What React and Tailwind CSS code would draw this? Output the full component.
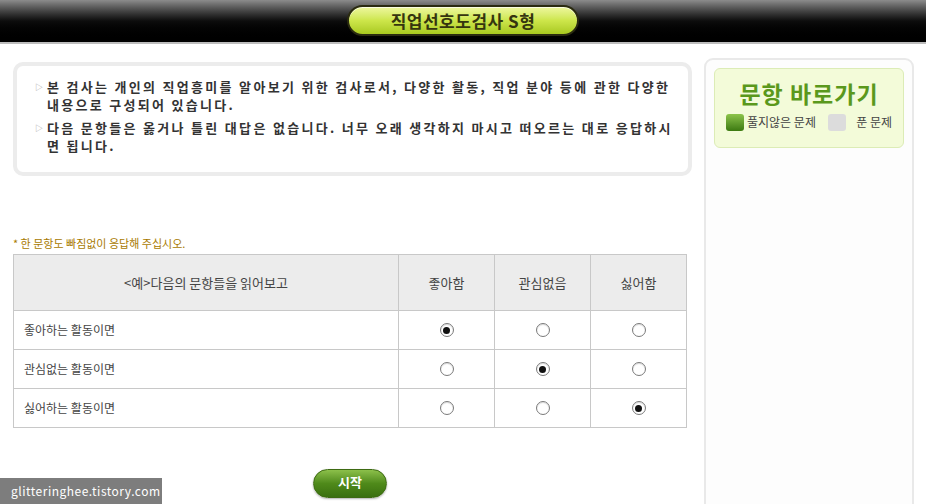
import React from 'react';

const font = { fontFamily: '"Noto Sans CJK KR", "Noto Sans", sans-serif' };

const rows = [
  { label: '좋아하는 활동이면', pick: 0 },
  { label: '관심없는 활동이면', pick: 1 },
  { label: '싫어하는 활동이면', pick: 2 },
];

function Radio({ checked }) {
  return (
    <span className="inline-flex w-[14px] h-[14px] rounded-full border border-[#7a7a7a] bg-white items-center justify-center shadow-[inset_0_1px_1px_rgba(0,0,0,0.15)]">
      {checked && <span className="w-[7px] h-[7px] rounded-full bg-[#111]" />}
    </span>
  );
}

function Bullet({ children }) {
  return (
    <p className="flex">
      <span className="w-[12px] shrink-0 text-[8px] leading-[18px] text-[#aaa] tracking-normal">▷</span>
      <span>{children}</span>
    </p>
  );
}

export default function App() {
  return (
    <div className="relative w-[926px] h-[504px] overflow-hidden bg-white" style={font}>
      <header className="h-[44px] bg-gradient-to-b from-[#8c8c8c] via-[#0d0d0d] to-black border-b-2 border-[#bdbdbd] flex justify-center pt-[5px]">
        <div className="w-[232px] h-[31px] rounded-full border-2 border-[#2a2a10] bg-gradient-to-b from-[#eef79c] via-[#cde64a] to-[#a9c91e] flex items-center justify-center shadow-[inset_0_1px_0_rgba(255,255,255,0.7)]">
          <span className="text-[17px] font-bold text-[#35350f] tracking-[0.5px]">직업선호도검사 S형</span>
        </div>
      </header>

      <div className="flex">
        <main className="w-[692px] pl-[13px] pt-[18px]">
          <section className="h-[114px] rounded-[10px] border-4 border-[#ececec] pl-[18px] pr-[10px] pt-[12px] text-[13px] font-bold leading-[18px] text-[#333] tracking-[2.3px] flex flex-col gap-[5px]">
            <Bullet>본 검사는 개인의 직업흥미를 알아보기 위한 검사로서, 다양한 활동, 직업 분야 등에 관한 다양한 내용으로 구성되어 있습니다.</Bullet>
            <Bullet>다음 문항들은 옳거나 틀린 대답은 없습니다. 너무 오래 생각하지 마시고 떠오르는 대로 응답하시면 됩니다.</Bullet>
          </section>

          <p className="mt-[60px] text-[11px] leading-[14px] text-[#a87a00]">* 한 문항도 빠짐없이 응답해 주십시오.</p>

          <table className="mt-[4px] w-[674px] border-collapse text-[12px] text-[#444]">
            <thead>
              <tr className="h-[56px] bg-[#ececec] text-[13px]">
                <th className="w-[385px] border border-[#c8c8c8] font-normal">&lt;예&gt;다음의 문항들을 읽어보고</th>
                <th className="w-[96px] border border-[#c8c8c8] font-normal">좋아함</th>
                <th className="w-[96px] border border-[#c8c8c8] font-normal">관심없음</th>
                <th className="border border-[#c8c8c8] font-normal">싫어함</th>
              </tr>
            </thead>
            <tbody>
              {rows.map((r) => (
                <tr key={r.label} className="h-[39px]">
                  <td className="border border-[#c8c8c8] pl-[10px]">{r.label}</td>
                  {[0, 1, 2].map((i) => (
                    <td key={i} className="border border-[#c8c8c8] text-center align-middle leading-none">
                      <Radio checked={r.pick === i} />
                    </td>
                  ))}
                </tr>
              ))}
            </tbody>
          </table>

          <div className="w-[674px] flex justify-center mt-[41px]">
            <button className="w-[74px] h-[29px] rounded-full border border-[#3d6a12] bg-gradient-to-b from-[#8cc04a] via-[#4f8a1a] to-[#3a7010] text-white text-[13px] font-bold shadow-[0_1px_2px_rgba(0,0,0,0.3)] pb-[3px]">
              시작
            </button>
          </div>
        </main>

        <aside className="ml-[12px] mt-[14px] w-[210px] h-[460px] rounded-[9px] border-2 border-[#e9e9e9] bg-[#fdfdfd] p-[8px]">
          <div className="h-[80px] rounded-[6px] border border-[#dcecb6] bg-[#f3fbd9] flex flex-col items-center pt-[10px]">
            <h2 className="text-[23px] font-bold leading-[28px] text-[#5a981c] tracking-[1px]">문항 바로가기</h2>
            <div className="mt-[6px] w-full flex items-center justify-between px-[11px] text-[12px] text-[#444]">
              <span className="flex items-center gap-[3px]">
                <span className="w-[18px] h-[17px] rounded-[3px] bg-gradient-to-b from-[#8cc44a] to-[#3c7a10]" />
                풀지않은 문제
              </span>
              <span className="flex items-center gap-[10px]">
                <span className="w-[18px] h-[17px] rounded-[3px] bg-[#dcdcdc]" />
                푼 문제
              </span>
            </div>
          </div>
        </aside>
      </div>

      <div className="absolute left-0 bottom-0 w-[162px] h-[26px] bg-[#7d7d7d] flex items-center pl-[11px] text-[12px] text-white tracking-[0.5px]">
        glitteringhee.tistory.com
      </div>
    </div>
  );
}
